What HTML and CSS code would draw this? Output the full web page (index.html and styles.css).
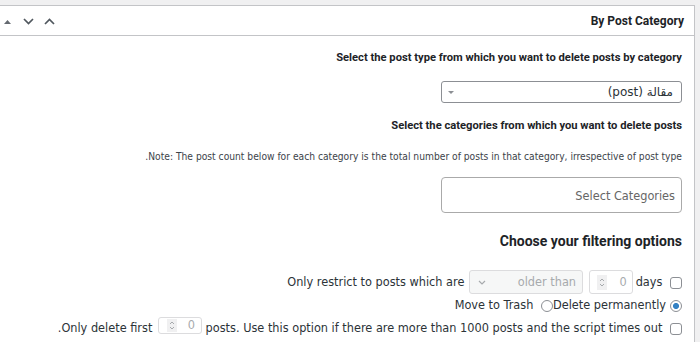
FILE: index.html
```html
<!DOCTYPE html>
<html lang="ar" dir="rtl">

<head>
    <meta charset="UTF-8">
    <meta name="viewport" content="width=device-width, initial-scale=1.0">
    <title>By Post Category</title>
    <link rel="stylesheet" href="styles.css">
</head>

<body>

    <div class="postbox">
        <div class="postbox-header">
            <h2 class="hndle">By Post Category</h2>
            <div class="handle-actions">
                <button class="handle-btn btn-up" aria-label="Move up">
                    <svg width="11" height="7" viewBox="0 0 11 7"><path d="M1 6 L5.5 1.5 L10 6" fill="none" stroke="#50575e" stroke-width="1.7"/></svg>
                </button>
                <button class="handle-btn btn-down" aria-label="Move down">
                    <svg width="11" height="7" viewBox="0 0 11 7"><path d="M1 1 L5.5 5.5 L10 1" fill="none" stroke="#50575e" stroke-width="1.7"/></svg>
                </button>
                <button class="handle-btn btn-toggle" aria-label="Toggle panel">
                    <svg width="7" height="4" viewBox="0 0 7 4"><polygon points="0,4 3.5,0 7,4" fill="#646970"/></svg>
                </button>
            </div>
        </div>

        <div class="inside">
            <h4 class="type-title">Select the post type from which you want to delete posts by category</h4>
            <div class="post-type-select">
                <span>مقالة (post)</span>
                <span class="select-arrow"></span>
            </div>

            <h4 class="cats-title">Select the categories from which you want to delete posts</h4>
            <p class="note">Note: The post count below for each category is the total number of posts in that category, irrespective of post type.</p>
            <div class="cat-select">Select Categories</div>

            <h3>Choose your filtering options</h3>

            <div class="opt-row row-days"><input type="checkbox"> <span>Only restrict to posts which are</span> <span class="fake-select"><span>older than</span><svg width="8" height="5" viewBox="0 0 8 5"><path d="M1 1 L4 4 L7 1" fill="none" stroke="#a7aaad" stroke-width="1.2"/></svg></span> <span class="fake-num"><span>0</span><span class="spin"><svg width="6" height="11" viewBox="0 0 6 11"><path d="M1 4 L3 2 L5 4 M1 7 L3 9 L5 7" fill="none" stroke="#a7aaad" stroke-width="1"/></svg></span></span><span>days</span></div>
            <div class="opt-row row-delete"><input type="radio" name="force_delete" value="false" checked><span>Move to Trash</span> <input type="radio" name="force_delete" value="true" class="radio-second"><span>Delete permanently</span></div>
            <div class="opt-row row-limit"><input type="checkbox"> <span>Only delete first</span> <span class="fake-num small"><span>0</span><span class="spin"><svg width="6" height="11" viewBox="0 0 6 11"><path d="M1 4 L3 2 L5 4 M1 7 L3 9 L5 7" fill="none" stroke="#a7aaad" stroke-width="1"/></svg></span></span> <span>posts. Use this option if there are more than 1000 posts and the script times out</span><span>.</span></div>
        </div>
    </div>

</body>

</html>
```

FILE: styles.css
```css
* {
    margin: 0;
    padding: 0;
    box-sizing: border-box;
}

html,
body {
    overflow: hidden;
}

body {
    background-color: #f0f0f1;
    font-family: "DejaVu Sans Condensed", "DejaVu Sans", sans-serif;
    font-size: 12.6px;
    color: #2c3338;
}

.postbox {
    margin: 5px 5px 0 -1px;
    background-color: #fff;
    border: 1px solid #c3c4c7;
}

.postbox-header {
    display: flex;
    justify-content: space-between;
    align-items: center;
    height: 30px;
    padding: 0 10px 0 4px;
    border-bottom: 1px solid #c3c4c7;
}

.hndle {
    font-family: Roboto, "Liberation Sans", sans-serif;
    font-weight: 700;
    font-size: 12px;
    color: #1d2327;
}

.handle-actions {
    display: flex;
    align-items: center;
    margin-top: 2px;
}

.handle-btn {
    display: flex;
    background: none;
    border: none;
}

.handle-btn svg {
    display: block;
}

.btn-down {
    margin-right: 10px;
}

.btn-toggle {
    margin-right: 12px;
}

.inside {
    padding: 0 12px 24px 0;
}

h4,
h3 {
    font-family: Roboto, "Liberation Sans", sans-serif;
    font-weight: 700;
    color: #1d2327;
}

h4 {
    font-size: 11.2px;
    line-height: 16px;
}

.type-title {
    margin-top: 14px;
}

.post-type-select {
    display: flex;
    justify-content: space-between;
    align-items: center;
    width: 241px;
    height: 22px;
    margin-top: 15px;
    padding: 0 8px 0 6px;
    border: 1px solid #8c8f94;
    border-radius: 3px;
    font-family: "DejaVu Sans", sans-serif;
    font-size: 12px;
}

.select-arrow {
    width: 0;
    height: 0;
    border-left: 3px solid transparent;
    border-right: 3px solid transparent;
    border-top: 3px solid #8c8f94;
}

.cats-title {
    margin-top: 15px;
}

.note {
    margin-top: 16px;
    font-size: 10.2px;
    line-height: 14px;
    color: #3c434a;
}

.cat-select {
    display: flex;
    align-items: center;
    width: 241px;
    height: 36px;
    margin-top: 13px;
    padding-right: 6px;
    border: 1px solid #aaa;
    border-radius: 4px;
    color: #666;
}

h3 {
    margin-top: 19px;
    font-size: 14px;
    line-height: 18px;
}

.opt-row {
    height: 24px;
    line-height: 24px;
    white-space: nowrap;
}

.row-days {
    margin-top: 20px;
}

.row-delete {
    height: 22px;
    line-height: 22px;
}

input[type="checkbox"],
input[type="radio"] {
    appearance: none;
    -webkit-appearance: none;
    display: inline-block;
    width: 12px;
    height: 12px;
    margin: 0 0 0 4px;
    border: 1px solid #8c8f94;
    border-radius: 3px;
    background-color: #fff;
    vertical-align: middle;
}

input[type="radio"] {
    border-radius: 50%;
}

input[type="radio"]:checked {
    background: radial-gradient(circle, #3582c4 0 2.7px, #fff 3.3px);
}

.radio-second {
    margin-right: 1px;
}

.fake-select,
.fake-num {
    display: inline-flex;
    justify-content: space-between;
    align-items: center;
    height: 24px;
    vertical-align: top;
    border: 1px solid #dcdcde;
    border-radius: 3px;
    color: #a7aaad;
    line-height: 1;
}

.fake-select {
    width: 114px;
    margin-left: 1px;
    padding: 0 6px 0 8px;
    background-color: #f6f7f7;
}

.fake-num {
    width: 44px;
    margin: 0 3px 0 2px;
    padding: 0 5px 0 7px;
    background-color: #fff;
}

.fake-num.small {
    height: 17px;
    margin: 1px 0 0 2px;
    padding: 0 6px 0 8px;
}

.spin {
    display: flex;
    align-items: center;
    justify-content: center;
    width: 10px;
    height: 15px;
    background-color: #f0f0f1;
}

.small .spin {
    height: 13px;
}
```
